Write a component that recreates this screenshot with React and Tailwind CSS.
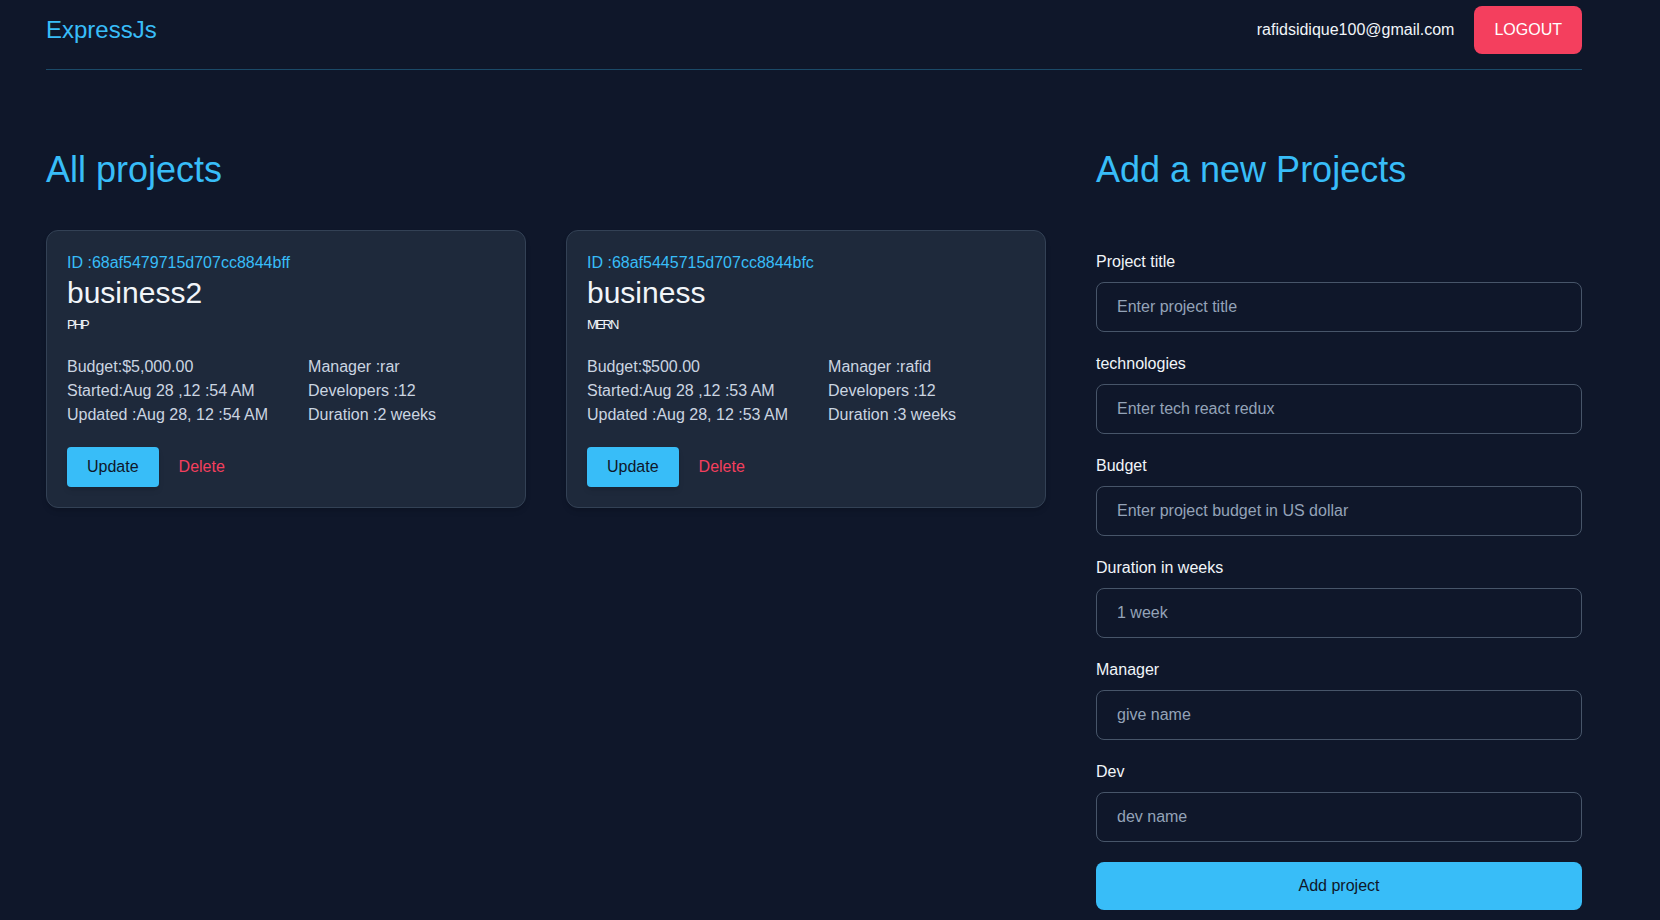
import React, { useState } from "react";

const projects = [
  {
    id: "68af5479715d707cc8844bff",
    title: "business2",
    tech: "PHP",
    budget: "$5,000.00",
    started: "Aug 28 ,12 :54 AM",
    updated: "Aug 28, 12 :54 AM",
    manager: "rar",
    developers: 12,
    duration: "2 weeks",
  },
  {
    id: "68af5445715d707cc8844bfc",
    title: "business",
    tech: "MERN",
    budget: "$500.00",
    started: "Aug 28 ,12 :53 AM",
    updated: "Aug 28, 12 :53 AM",
    manager: "rafid",
    developers: 12,
    duration: "3 weeks",
  },
];

const fields = [
  { name: "title", label: "Project title", placeholder: "Enter project title" },
  { name: "technologies", label: "technologies", placeholder: "Enter tech react redux" },
  { name: "budget", label: "Budget", placeholder: "Enter project budget in US dollar" },
  { name: "duration", label: "Duration in weeks", placeholder: "1 week" },
  { name: "manager", label: "Manager", placeholder: "give name" },
  { name: "dev", label: "Dev", placeholder: "dev name" },
];

function ProjectCard({ project }) {
  return (
    <div className="rounded-xl border border-[#334155] bg-[#1e293b] p-5 shadow-md">
      <p className="text-base leading-6 text-[#38bdf8]">ID :{project.id}</p>
      <h3 className="text-3xl leading-9 text-[#f1f5f9]">{project.title}</h3>
      <p className="mt-1.5 text-[13px] leading-4 font-medium tracking-[-2px] text-[#f1f5f9]">
        {project.tech}
      </p>

      <div className="mt-[22px] flex gap-10 text-base leading-6 text-[#cbd5e1]">
        <div>
          <p>Budget:{project.budget}</p>
          <p>Started:{project.started}</p>
          <p>Updated :{project.updated}</p>
        </div>
        <div>
          <p>Manager :{project.manager}</p>
          <p>Developers :{project.developers}</p>
          <p>Duration :{project.duration}</p>
        </div>
      </div>

      <div className="mt-5 flex items-center gap-5">
        <button className="rounded bg-[#38bdf8] px-5 py-2 text-base leading-6 text-[#0f172a] shadow-md">
          Update
        </button>
        <button className="text-base leading-6 text-[#f43f5e]">Delete</button>
      </div>
    </div>
  );
}

export default function App() {
  const [form, setForm] = useState({});

  const handleChange = (e) => {
    setForm({ ...form, [e.target.name]: e.target.value });
  };

  return (
    <div className="min-h-screen bg-[#0f172a] font-['Liberation_Sans',Arial,sans-serif]">
      <div className="ml-[46px] w-[1536px]">
        <header className="flex items-center justify-between border-b border-[#1b4a68] pt-[6px] pb-[15px]">
          <span className="text-2xl leading-8 text-[#38bdf8]">ExpressJs</span>
          <div className="flex items-center gap-5">
            <span className="text-base leading-6 text-[#f1f5f9]">
              rafidsidique100@gmail.com
            </span>
            <button className="rounded-lg bg-[#f43f5e] px-5 py-3 text-base leading-6 text-white">
              LOGOUT
            </button>
          </div>
        </header>

        <main className="mt-[80px] flex gap-[50px]">
          <section className="w-[1000px]">
            <h2 className="mb-10 text-4xl leading-10 text-[#38bdf8]">All projects</h2>
            <div className="grid grid-cols-2 items-start gap-10">
              {projects.map((p) => (
                <ProjectCard key={p.id} project={p} />
              ))}
            </div>
          </section>

          <section className="w-[486px]">
            <h2 className="mb-[60px] text-4xl leading-10 text-[#38bdf8]">Add a new Projects</h2>
            <form className="flex flex-col gap-5" onSubmit={(e) => e.preventDefault()}>
              {fields.map((f) => (
                <div key={f.name}>
                  <label
                    htmlFor={f.name}
                    className="mb-2 block text-base leading-6 text-[#f1f5f9]"
                  >
                    {f.label}
                  </label>
                  <input
                    id={f.name}
                    name={f.name}
                    value={form[f.name] || ""}
                    onChange={handleChange}
                    placeholder={f.placeholder}
                    className="block w-full rounded-lg border border-[#475569] bg-transparent px-5 py-3 text-base leading-6 text-[#f1f5f9] placeholder-[#94a3b8] outline-none"
                  />
                </div>
              ))}
              <button
                type="submit"
                className="rounded-lg bg-[#38bdf8] py-3 text-base leading-6 text-[#0f172a]"
              >
                Add project
              </button>
            </form>
          </section>
        </main>
      </div>
    </div>
  );
}
